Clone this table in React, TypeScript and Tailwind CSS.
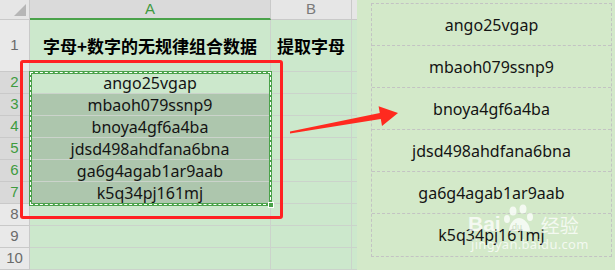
import React from "react";

const data = [
  "ango25vgap",
  "mbaoh079ssnp9",
  "bnoya4gf6a4ba",
  "jdsd498ahdfana6bna",
  "ga6g4agab1ar9aab",
  "k5q34pj161mj",
];

const latin = { fontFamily: '"Noto Sans", "Open Sans", sans-serif' };
const cjk = { fontFamily: '"Noto Sans CJK SC", "Noto Sans", sans-serif' };
const num = { fontFamily: '"Liberation Sans", "DejaVu Sans", sans-serif' };

function Row({ n, h, a, b, sel, shade }: { n: number; h: string; a?: React.ReactNode; b?: React.ReactNode; sel?: boolean; shade?: boolean }) {
  return (
    <div className={`flex ${h}`}>
      <div
        className={`w-[30px] shrink-0 flex items-center justify-center border-r border-b border-[#c9c9c9] text-[15px] ${sel ? "bg-[#d9d9d9] text-[#3f9b3f]" : "bg-[#e9e9e9] text-[#6b6b6b]"}`}
        style={num}
      >
        {n}
      </div>
      <div
        className={`w-[241px] shrink-0 flex items-center justify-center border-r border-b border-[#cbd3cb] ${shade ? "bg-[#adc6ad]" : ""}`}
      >
        {a}
      </div>
      <div className="w-[81px] shrink-0 flex items-center justify-center border-r border-b border-[#cbd3cb]">{b}</div>
      <div className="flex-1 border-b border-[#cbd3cb]" />
    </div>
  );
}

export default function App() {
  return (
    <div className="relative w-[615px] h-[270px] overflow-hidden bg-[#d3e9c9] flex">
      {/* Sheet */}
      <div className="w-[357px] h-[270px] shrink-0 bg-[#cce8cc] flex flex-col">
        {/* column header */}
        <div className="flex h-[20px] shrink-0">
          <div className="w-[30px] shrink-0 bg-[#e6e6e6] border-r border-b border-[#c9c9c9] flex items-end justify-end pr-[3px] pb-[3px]">
            <svg width="12" height="12" viewBox="0 0 12 12">
              <polygon points="12,0 12,12 0,12" fill="#b6b6b6" />
            </svg>
          </div>
          <div className="w-[241px] shrink-0 bg-[#dadada] border-r border-[#c9c9c9] border-b-2 border-b-[#4aa24a] flex items-center justify-center text-[15px] text-[#3f9b3f]" style={num}>
            A
          </div>
          <div className="w-[81px] shrink-0 bg-[#e6e6e6] border-r border-b border-[#c9c9c9] flex items-center justify-center text-[15px] text-[#7a7a7a]" style={num}>
            B
          </div>
          <div className="flex-1 bg-[#e6e6e6] border-b border-[#c9c9c9]" />
        </div>
        <Row
          n={1}
          h="h-[52px]"
          a={<span className="text-[17px] font-bold text-black" style={cjk}>字母+数字的无规律组合数据</span>}
          b={<span className="text-[17px] font-bold text-black" style={cjk}>提取字母</span>}
        />
        {data.map((d, i) => (
          <Row
            key={d}
            n={i + 2}
            h="h-[22px]"
            sel
            shade={i > 0}
            a={<span className="text-[16px] text-[#141414] leading-none" style={latin}>{d}</span>}
          />
        ))}
        <Row n={8} h="h-[22px]" />
        <Row n={9} h="h-[22px]" />
        <Row n={10} h="h-[22px]" />
      </div>

      {/* Right panel */}
      <div className="flex-1 pl-[14px] pt-[3px]">
        <div className="w-[241px] border border-dashed border-[#c3c3c3] flex flex-col">
          {data.map((d, i) => (
            <div
              key={d}
              className={`h-[42px] flex items-center justify-center ${i < data.length - 1 ? "border-b border-dashed border-[#c3c3c3]" : ""}`}
            >
              <span className="text-[16px] text-[#141414]" style={latin}>{d}</span>
            </div>
          ))}
        </div>
      </div>

      {/* Selection marching ants */}
      <div className="absolute left-[29px] top-[71px] w-[243px] h-[135px] border-[3px] border-[#4aa24a]">
        <div className="absolute inset-[-2px] border border-dashed border-white" />
        <div className="absolute right-[-5px] bottom-[-5px] w-[6px] h-[6px] bg-[#4aa24a] border border-white" />
      </div>

      {/* Red rectangle */}
      <div className="absolute left-[20px] top-[60px] w-[263px] h-[159px] border-[3px] border-[#ff2222] rounded-[3px]" />

      {/* Red arrow */}
      <svg className="absolute left-0 top-0" width="615" height="270" viewBox="0 0 615 270">
        <polygon
          points="290,131.5 379.8,113.1 378.6,106.3 398,113 382,125.9 380.8,119.1 290,133.5"
          fill="#ff2a1f"
        />
      </svg>

      {/* Watermark */}
      <div className="absolute left-[468px] top-[204px] flex flex-col items-start text-white/75">
        <div className="flex items-end gap-[2px]">
          <span className="text-[21px] font-bold leading-none" style={{ fontFamily: '"Liberation Sans", sans-serif' }}>Bai</span>
          <svg width="34" height="30" viewBox="0 0 34 30">
            <g fill="rgba(255,255,255,0.75)">
              <ellipse cx="10" cy="7" rx="3.5" ry="4.5" />
              <ellipse cx="20" cy="5" rx="3.5" ry="4.5" />
              <ellipse cx="4" cy="15" rx="3" ry="4" />
              <ellipse cx="27" cy="13" rx="3" ry="4" />
              <path d="M6 27 C6 20 11 14 16 14 C21 14 27 20 27 27 Z" />
            </g>
            <text x="9" y="26" fontSize="9" fill="#cce0c4" fontFamily="Liberation Sans">du</text>
          </svg>
          <span className="text-[19px] leading-none ml-[2px]" style={cjk}>经验</span>
        </div>
        <span className="text-[13px] leading-none mt-[4px] ml-[3px] tracking-[0.3px]" style={latin}>jingyan.baidu.com</span>
      </div>
    </div>
  );
}
